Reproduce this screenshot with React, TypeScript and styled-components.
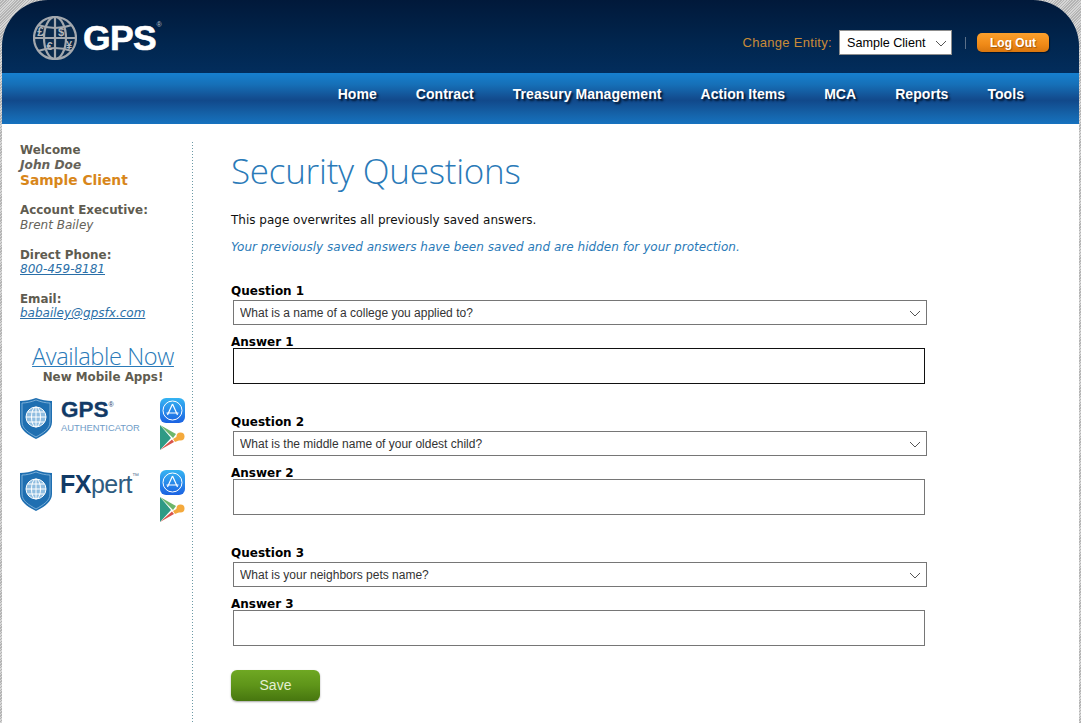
import * as React from "react"
import styled, { createGlobalStyle } from "styled-components"

const GlobalStyle = createGlobalStyle`
    html, body {
        margin: 0;
        padding: 0;
        background: #fff;
    }
    body {
        font-family: "DejaVu Sans", Verdana, sans-serif;
    }
    * {
        box-sizing: border-box;
    }
`

const Page = styled.div`
    width: 1081px;
    height: 723px;
    overflow: hidden;
    padding: 0 2px;
    background: repeating-linear-gradient(135deg, #b4b4b4 0, #b4b4b4 1px, #d6d6d6 1px, #d6d6d6 2px);
    display: flex;
    flex-direction: column;
`

const Header = styled.header`
    height: 73px;
    flex: none;
    display: flex;
    justify-content: space-between;
    align-items: center;
    padding: 0 30px 0 31px;
    border-radius: 46px 46px 0 0;
    background: linear-gradient(to bottom, #01193a 0%, #01264f 60%, #022d5c 100%);
`

const Logo = styled.div`
    display: flex;
    align-items: center;
    gap: 6px;
    margin-top: 3px;
`

const LogoText = styled.div`
    font-family: "Liberation Sans", Arial, sans-serif;
    font-weight: 700;
    font-size: 35.5px;
    line-height: 40px;
    letter-spacing: -0.6px;
    color: #fff;
    -webkit-text-stroke: 0.6px #fff;
    position: relative;

    sup {
        position: absolute;
        top: 3px;
        right: -5px;
        font-size: 7px;
        line-height: 8px;
        font-weight: 400;
        color: #c0c8d0;
        -webkit-text-stroke: 0;
    }
`

const EntityBar = styled.div`
    display: flex;
    align-items: center;
    margin-top: 12px;
`

const EntityLabel = styled.span`
    font-family: "Liberation Sans", Arial, sans-serif;
    font-size: 13px;
    letter-spacing: 0.3px;
    color: #c98b38;
    margin-right: 7px;
`

const SelectWrap = styled.div<{ $width: number; $height: number }>`
    position: relative;
    width: ${p => p.$width}px;
    height: ${p => p.$height}px;
    flex: none;
`

const EntitySelect = styled.select`
    appearance: none;
    width: 100%;
    height: 100%;
    padding: 0 0 0 7px;
    border: 1px solid #8d8d8d;
    border-radius: 0;
    background: #fff;
    color: #000;
    font-family: "Liberation Sans", Arial, sans-serif;
    font-size: 12.6px;
`

const Chevron = styled.svg<{ $right: number }>`
    position: absolute;
    right: ${p => p.$right}px;
    top: 50%;
    margin-top: -3px;
    pointer-events: none;
`

const Separator = styled.span`
    width: 1px;
    height: 12px;
    margin: 0 11px 0 13px;
    background: #5c7088;
`

const LogOut = styled.button`
    width: 72px;
    height: 19px;
    padding: 0;
    border: 0;
    border-radius: 5px;
    background: linear-gradient(to bottom, #fca02c 0%, #f08a17 60%, #d9760e 100%);
    box-shadow: 1px 1px 1px rgba(0, 0, 0, 0.45);
    color: #fff;
    font-family: "Liberation Sans", Arial, sans-serif;
    font-size: 12px;
    font-weight: 700;
    text-shadow: 1px 1px 1px rgba(120, 60, 0, 0.6);
`

const Nav = styled.nav`
    height: 51px;
    flex: none;
    display: flex;
    justify-content: flex-end;
    align-items: flex-start;
    gap: 39px;
    padding: 13px 55px 0 0;
    background: linear-gradient(to bottom, #1680cf 0%, #1670b8 22%, #134f92 48%, #11498b 54%, #1562a8 80%, #1672bf 100%);
`

const NavLink = styled.a`
    font-family: "Liberation Sans", Arial, sans-serif;
    font-size: 14px;
    line-height: 17px;
    font-weight: 700;
    letter-spacing: 0.05px;
    color: #fff;
    text-shadow: 2px 2px 2px #00142e;
`

const Body = styled.div`
    flex: 1;
    min-height: 0;
    display: flex;
    background: #fff;
`

const Sidebar = styled.aside`
    width: 191px;
    flex: none;
    margin-top: 18px;
    padding: 1px 0 0 18px;
    background: linear-gradient(to bottom, #6c9aa6 34%, transparent 34%) right top / 1px 3px repeat-y;
`

const InfoBlock = styled.div`
    margin-bottom: 15px;
    font-size: 13px;
    line-height: 15px;
    color: #5f5c50;
`

const InfoTitle = styled.div`
    font-weight: 700;
    font-size: 11.9px;
    line-height: 14px;
`

const InfoName = styled.div`
    padding-top: 1px;
    font-style: italic;
    font-size: 12px;
    color: #66635a;
`

const UserName = styled(InfoName)`
    font-weight: 700;
    font-size: 12.2px;
`

const ClientName = styled.div`
    font-weight: 700;
    font-size: 13.8px;
    line-height: 15px;
    color: #d8861a;
`

const InfoLink = styled.a`
    display: block;
    font-style: italic;
    font-size: 12px;
    color: #2a6fa8;
    text-decoration: underline;
`

const Promo = styled.div`
    margin-top: 22px;
    padding-right: 7px;
    text-align: center;
`

const PromoTitle = styled.a`
    display: block;
    font-family: "Open Sans", sans-serif;
    font-weight: 300;
    font-size: 23.6px;
    line-height: 27px;
    letter-spacing: -0.4px;
    color: #2a7ab8;
    text-decoration: underline;
    text-decoration-thickness: 1px;
`

const PromoSub = styled.div`
    font-weight: 700;
    font-size: 11.9px;
    line-height: 15px;
    color: #5f5c50;
`

const AppRow = styled.div<{ $top: number }>`
    display: flex;
    justify-content: space-between;
    margin-top: ${p => p.$top}px;
    padding-right: 8px;
`

const AppBrand = styled.div`
    display: flex;
    align-items: flex-start;
    gap: 9px;
`

const BrandName = styled.div`
    font-family: "Liberation Sans", Arial, sans-serif;
    color: #123a66;
    font-weight: 700;
    font-size: 22.5px;
    line-height: 22px;
    margin-top: 1px;
    -webkit-text-stroke: 0.3px #123a66;

    sup {
        font-size: 7px;
        vertical-align: top;
        line-height: 12px;
        font-weight: 400;
        -webkit-text-stroke: 0;
    }
`

const BrandCaption = styled.div`
    font-family: "Liberation Sans", Arial, sans-serif;
    font-weight: 400;
    font-size: 9.4px;
    line-height: 12px;
    margin-top: 1px;
    color: #6f9cc7;
`

const FxName = styled.div`
    font-family: "Liberation Sans", Arial, sans-serif;
    font-size: 25px;
    line-height: 29px;
    letter-spacing: -0.5px;
    margin-left: -1px;
    color: #123a66;

    b {
        font-weight: 700;
    }

    span {
        font-weight: 400;
        color: #2f5b80;
    }

    sup {
        font-size: 7px;
        line-height: 12px;
        vertical-align: top;
        color: #5d7c98;
    }
`

const StoreIcons = styled.div`
    display: flex;
    flex-direction: column;
    gap: 2px;
`

const Main = styled.main`
    flex: 1;
    padding: 26px 0 0 38px;
`

const Title = styled.h1`
    margin: 0 0 21px;
    font-family: "Open Sans", sans-serif;
    font-weight: 300;
    font-size: 35px;
    line-height: 42px;
    letter-spacing: -0.25px;
    color: #2a7ab8;
`

const Intro = styled.p`
    margin: 0 0 12px;
    font-size: 12px;
    line-height: 15px;
    color: #111;
`

const Notice = styled(Intro)`
    font-style: italic;
    color: #2a7ab8;
    margin-bottom: 29px;
    letter-spacing: 0.03px;
`

const QuestionBlock = styled.div`
    height: 131px;
`

const FieldLabel = styled.label`
    display: block;
    font-weight: 700;
    font-size: 12px;
    line-height: 15px;
    color: #000;
`

const AnswerLabel = styled(FieldLabel)`
    margin-top: 11px;
    line-height: 12px;
`

const QuestionWrap = styled(SelectWrap)`
    margin: 1px 0 0 2px;
`

const QuestionSelect = styled.select`
    appearance: none;
    width: 100%;
    height: 100%;
    padding: 0 0 0 6px;
    border: 1px solid #767676;
    border-radius: 0;
    background: #fff;
    color: #333;
    font-family: "Liberation Sans", Arial, sans-serif;
    font-size: 12px;
`

const AnswerInput = styled.input<{ $focused?: boolean }>`
    display: block;
    width: 692px;
    height: 36px;
    margin: 0 0 0 2px;
    border: 1px solid ${p => (p.$focused ? "#111" : "#767676")};
    border-radius: 0;
    background: #fff;
    outline: none;
`

const SaveButton = styled.button`
    display: block;
    width: 89px;
    height: 31px;
    margin-top: -7px;
    padding: 0 0 2px;
    border: 0;
    border-radius: 6px;
    background: linear-gradient(to bottom, #6fa823 0%, #5e9419 50%, #47760f 100%);
    box-shadow: 0 1px 2px rgba(0, 0, 0, 0.35);
    color: #e4efd2;
    font-family: "Liberation Sans", Arial, sans-serif;
    font-size: 14px;
`

const ChevronIcon = ({ right }: { right: number }) => (
    <Chevron $right={right} width="12" height="7" viewBox="0 0 12 7">
        <path d="M1 1 L6 6 L11 1" fill="none" stroke="#555" strokeWidth="1" />
    </Chevron>
)

const GlobeLogo = () => (
    <svg width="44" height="44" viewBox="0 0 44 44">
        <circle cx="22" cy="22" r="21" fill="#0a2a4c" stroke="#a3a8ae" strokeWidth="2.2" />
        <g fill="none" stroke="#a3a8ae" strokeWidth="2.2">
            <ellipse cx="22" cy="22" rx="11" ry="21" />
            <path d="M22 1 V43 M1 22 H43" />
            <path d="M5 9 Q22 15 39 9 M5 35 Q22 29 39 35" />
        </g>
        <g fontFamily="Liberation Sans, sans-serif" fontWeight="700" fontSize="12" fill="#b4b8bd" textAnchor="middle">
            <text x="7.5" y="19.5">£</text>
            <text x="28" y="19.5" fontSize="11">$</text>
            <text x="16.5" y="33.5" fontSize="11">€</text>
            <text x="36" y="33" fontSize="11">¥</text>
        </g>
    </svg>
)

const ShieldIcon = () => (
    <svg width="32" height="41" viewBox="0 0 32 41">
        <path d="M16 0 C21 2 27 3 32 3 V24 C32 32 24 37 16 41 C8 37 0 32 0 24 V3 C5 3 11 2 16 0 Z" fill="#1f6fb1" />
        <path d="M16 2 C21 4 26 5 30 5 V24 C30 31 23 35 16 39 C9 35 2 31 2 24 V5 C6 5 11 4 16 2 Z" fill="none" stroke="#8fbce0" strokeWidth="0.8" />
        <circle cx="16" cy="19" r="10" fill="#8fbde0" />
        <g fill="none" stroke="#fff" strokeWidth="1">
            <circle cx="16" cy="19" r="10" />
            <ellipse cx="16" cy="19" rx="4.5" ry="10" />
            <path d="M16 9 V29 M6 19 H26 M7.5 14 H24.5 M7.5 24 H24.5" />
        </g>
    </svg>
)

const AppStoreIcon = () => (
    <svg width="25" height="25" viewBox="0 0 25 25">
        <defs>
            <linearGradient id="store" x1="0" y1="0" x2="0" y2="1">
                <stop offset="0" stopColor="#35b4f2" />
                <stop offset="1" stopColor="#1b62e2" />
            </linearGradient>
        </defs>
        <rect width="25" height="25" rx="6" fill="url(#store)" />
        <circle cx="12.5" cy="12.5" r="9.5" fill="none" stroke="#fff" strokeWidth="1" />
        <path d="M12.5 6 L7.5 17 M12.5 6 L17.5 17 M6.5 15 H18.5" fill="none" stroke="#fff" strokeWidth="1.2" />
    </svg>
)

const PlayIcon = () => (
    <svg width="25" height="25" viewBox="0 0 25 25">
        <path d="M0 0 L11 13 L0 25 Z" fill="#2f9a85" />
        <path d="M0 0 L16 9 L13 13 L11 11 Z" fill="#6db66b" />
        <path d="M0 25 L14 17 L12 14.5 Z" fill="#d9534a" />
        <circle cx="20.5" cy="11.5" r="4" fill="#f4a93c" />
        <path d="M13 14 L18 11 L20 15 L15 17 Z" fill="#f4a93c" />
    </svg>
)

const questions = [
    { id: 1, text: "What is a name of a college you applied to?", focused: true },
    { id: 2, text: "What is the middle name of your oldest child?", focused: false },
    { id: 3, text: "What is your neighbors pets name?", focused: false }
]

const navItems = ["Home", "Contract", "Treasury Management", "Action Items", "MCA", "Reports", "Tools"]

export default function App() {
    return (
        <Page>
            <GlobalStyle />
            <Header>
                <Logo>
                    <GlobeLogo />
                    <LogoText>
                        GPS<sup>®</sup>
                    </LogoText>
                </Logo>
                <EntityBar>
                    <EntityLabel>Change Entity:</EntityLabel>
                    <SelectWrap $width={113} $height={25}>
                        <EntitySelect defaultValue="Sample Client">
                            <option>Sample Client</option>
                        </EntitySelect>
                        <ChevronIcon right={5} />
                    </SelectWrap>
                    <Separator />
                    <LogOut>Log Out</LogOut>
                </EntityBar>
            </Header>
            <Nav>
                {navItems.map(item => (
                    <NavLink key={item}>{item}</NavLink>
                ))}
            </Nav>
            <Body>
                <Sidebar>
                    <InfoBlock>
                        <InfoTitle>Welcome</InfoTitle>
                        <UserName>John Doe</UserName>
                        <ClientName>Sample Client</ClientName>
                    </InfoBlock>
                    <InfoBlock>
                        <InfoTitle>Account Executive:</InfoTitle>
                        <InfoName>Brent Bailey</InfoName>
                    </InfoBlock>
                    <InfoBlock>
                        <InfoTitle>Direct Phone:</InfoTitle>
                        <InfoLink>800-459-8181</InfoLink>
                    </InfoBlock>
                    <InfoBlock>
                        <InfoTitle>Email:</InfoTitle>
                        <InfoLink>babailey@gpsfx.com</InfoLink>
                    </InfoBlock>
                    <Promo>
                        <PromoTitle>Available Now</PromoTitle>
                        <PromoSub>New Mobile Apps!</PromoSub>
                    </Promo>
                    <AppRow $top={13}>
                        <AppBrand>
                            <ShieldIcon />
                            <div>
                                <BrandName>
                                    GPS<sup>®</sup>
                                </BrandName>
                                <BrandCaption>AUTHENTICATOR</BrandCaption>
                            </div>
                        </AppBrand>
                        <StoreIcons>
                            <AppStoreIcon />
                            <PlayIcon />
                        </StoreIcons>
                    </AppRow>
                    <AppRow $top={20}>
                        <AppBrand>
                            <ShieldIcon />
                            <FxName>
                                <b>FX</b>
                                <span>pert</span>
                                <sup>™</sup>
                            </FxName>
                        </AppBrand>
                        <StoreIcons>
                            <AppStoreIcon />
                            <PlayIcon />
                        </StoreIcons>
                    </AppRow>
                </Sidebar>
                <Main>
                    <Title>Security Questions</Title>
                    <Intro>This page overwrites all previously saved answers.</Intro>
                    <Notice>Your previously saved answers have been saved and are hidden for your protection.</Notice>
                    {questions.map(q => (
                        <QuestionBlock key={q.id}>
                            <FieldLabel>Question {q.id}</FieldLabel>
                            <QuestionWrap $width={694} $height={25}>
                                <QuestionSelect defaultValue={q.text}>
                                    <option>{q.text}</option>
                                </QuestionSelect>
                                <ChevronIcon right={6} />
                            </QuestionWrap>
                            <AnswerLabel>Answer {q.id}</AnswerLabel>
                            <AnswerInput $focused={q.focused} />
                        </QuestionBlock>
                    ))}
                    <SaveButton>Save</SaveButton>
                </Main>
            </Body>
        </Page>
    )
}
